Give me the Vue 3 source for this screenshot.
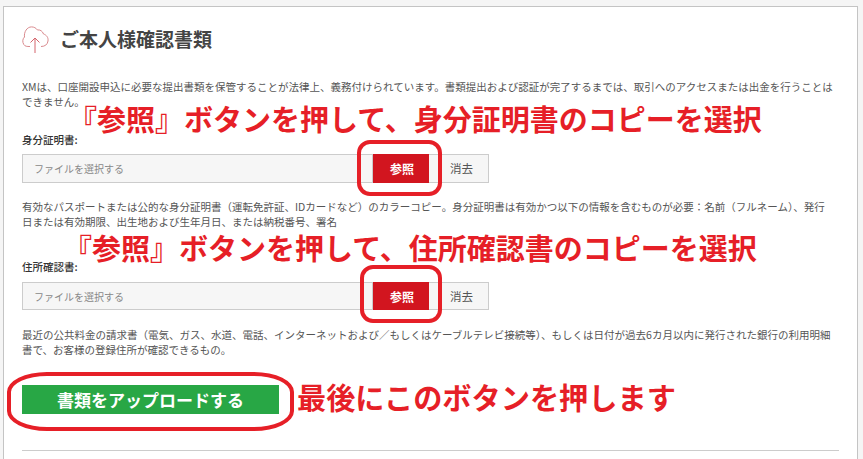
<template>
  <div class="page">
    <div class="card">
      <div class="heading">
        <svg class="cloud" width="28" height="28" viewBox="0 0 28 28" fill="none" stroke="#d98a8e" stroke-width="1">
          <path d="M8 20.5C5 20.5 3 20.5 1.8 18.5C.3 16 .4 13 2.5 11C1.8 6 5 .9 9.5 .9C12 .9 14 2 15.5 4C18 3.5 20.5 5 21.5 8C24.5 9 26.5 11.5 26 15C25.5 18.5 23 20.5 19 20.5" />
          <path d="M13 27V12M8.5 16.5L13 12L17.5 16.5" stroke="#d4656c" />
        </svg>
        <h2>ご本人様確認書類</h2>
      </div>

      <p class="intro">XMは、口座開設申込に必要な提出書類を保管することが法律上、義務付けられています。書類提出および認証が完了するまでは、取引へのアクセスまたは出金を行うことはできません。</p>

      <div v-for="doc in docs" :key="doc.label" class="doc">
        <label>{{ doc.label }}:</label>
        <div class="file-row">
          <div class="file-name">ファイルを選択する</div>
          <button class="browse">参照</button>
          <button class="clear">消去</button>
        </div>
        <p class="hint">{{ doc.hint }}</p>
      </div>

      <button class="upload">書類をアップロードする</button>
      <hr />
    </div>

    <div class="note note-1">『参照』ボタンを押して、身分証明書のコピーを選択</div>
    <div class="note note-2">『参照』ボタンを押して、住所確認書のコピーを選択</div>
    <div class="note note-3">最後にこのボタンを押します</div>
    <div class="ring ring-1"></div>
    <div class="ring ring-2"></div>
    <div class="ring ring-3"></div>
  </div>
</template>

<script setup>
const docs = [
  {
    label: '身分証明書',
    hint: '有効なパスポートまたは公的な身分証明書（運転免許証、IDカードなど）のカラーコピー。身分証明書は有効かつ以下の情報を含むものが必要：名前（フルネーム）、発行\n日または有効期限、出生地および生年月日、または納税番号、署名'
  },
  {
    label: '住所確認書',
    hint: '最近の公共料金の請求書（電気、ガス、水道、電話、インターネットおよび／もしくはケーブルテレビ接続等）、もしくは日付が過去6カ月以内に発行された銀行の利用明細書で、お客様の登録住所が確認できるもの。'
  }
]
</script>

<style>
html,
body {
  margin: 0;
  overflow: hidden;
}
</style>

<style scoped>
.page {
  position: relative;
  width: 863px;
  height: 459px;
  overflow: hidden;
  padding: 6px 5px 0 3px;
  box-sizing: border-box;
  background: #f5f5f5;
  font-family: "Noto Sans CJK JP", sans-serif;
  font-size: 10.5px;
  line-height: 15px;
  color: #555;
}

.card {
  height: 500px;
  box-sizing: border-box;
  padding: 0 18px;
  background: #fff;
  border: 1px solid #c4c4c4;
}

.heading {
  display: flex;
  align-items: center;
  gap: 10px;
  height: 28px;
  margin-top: 19px;
}

.heading h2 {
  margin: -2px 0 0;
  font-size: 19px;
  font-weight: 700;
  line-height: 28px;
  color: #444;
}

.intro {
  margin: 25px 0 0;
}

.doc {
  margin-top: 23px;
}

.doc + .doc {
  margin-top: 30px;
}

.doc label {
  display: block;
  font-weight: 500;
  color: #333;
}

.file-row {
  display: flex;
  height: 29px;
  margin-top: 7px;
}

.doc + .doc .file-row {
  height: 28px;
  margin-top: 8px;
}

.file-name {
  width: 351px;
  box-sizing: border-box;
  padding-left: 11px;
  background: #f6f6f6;
  border: 1px solid #ccc;
  font-size: 10px;
  line-height: 27px;
  color: #888;
}

.file-row button {
  height: 100%;
  padding: 0;
  border: 1px solid #ccc;
  font: inherit;
}

.file-row .browse {
  width: 56px;
  padding-left: 2px;
  background: #d2151f;
  border-color: #d2151f;
  font-size: 12px;
  font-weight: 700;
  color: #fff;
}

.file-row .clear {
  width: 60px;
  padding-left: 6px;
  border-left: 0;
  background: #f6f6f6;
  font-size: 11.5px;
  color: #555;
}

.hint {
  margin: 16px 0 0;
  white-space: pre-line;
}

.doc + .doc .hint {
  margin-top: 17px;
}

.upload {
  display: block;
  width: 257px;
  height: 29px;
  margin-top: 28px;
  padding: 0;
  border: 0;
  background: #28a745;
  font-family: inherit;
  font-size: 17px;
  font-weight: 700;
  color: #fff;
}

hr {
  height: 1px;
  margin: 36px 0 0;
  border: 0;
  background: #ccc;
}

.note {
  position: absolute;
  font-size: 29px;
  font-weight: 700;
  line-height: 36px;
  white-space: nowrap;
  color: #e61f27;
}

.note-1 {
  left: 68px;
  top: 100px;
}

.note-2 {
  left: 63px;
  top: 229px;
}

.note-3 {
  left: 297px;
  top: 378px;
  font-size: 29.2px;
}

.ring {
  position: absolute;
  box-sizing: border-box;
  border: 4px solid #e61f27;
  border-radius: 13px;
}

.ring-1 {
  left: 357px;
  top: 140px;
  width: 85px;
  height: 56px;
}

.ring-2 {
  left: 360px;
  top: 265px;
  width: 82px;
  height: 58px;
}

.ring-3 {
  left: 7px;
  top: 372px;
  width: 287px;
  height: 59px;
  border-radius: 40px / 20px;
}
</style>
